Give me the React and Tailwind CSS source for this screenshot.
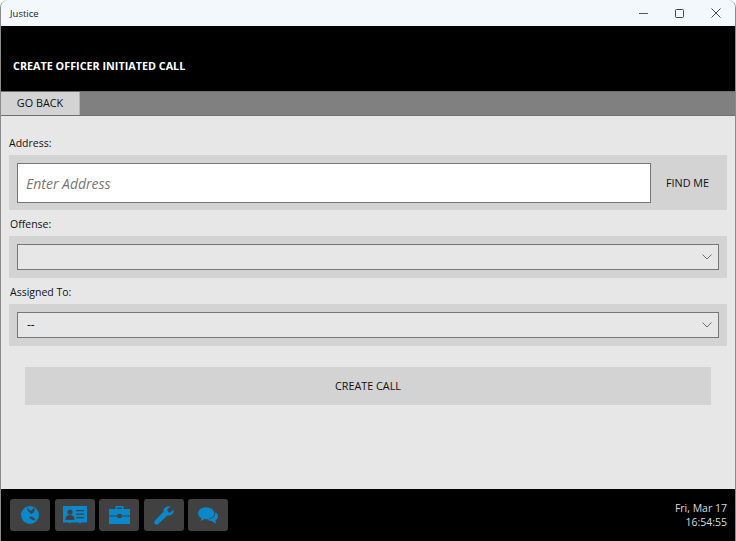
import React from "react";

const Globe = () => (
  <svg width="18" height="18" viewBox="0 0 18 18"><circle cx="9" cy="9" r="9" fill="#0a88cc"/><path d="M6.500 1.500 8 3.500 9.500 5 11.500 3.500 12.500 1.500 13.500 2.500 13.500 5 12 7 10 8 8 6 6 3.500Z M8 11 11 10.500 13.500 12.500 14.500 14.500 12 14 9.500 13Z" fill="#414141"/></svg>
);
const Card = () => (
  <svg width="24" height="18" viewBox="0 0 24 18"><path d="M0 0h24v16.500h-6l-1 1.500-1-1.500H8l-1 1.500-1-1.500H0z" fill="#0a88cc"/><circle cx="7" cy="6" r="2.600" fill="#414141"/><path d="M2.500 14c0-4 2-5 4.500-5s4.500 1 4.500 5z" fill="#414141"/><path d="M13 4h8v1.200h-8zM13 7.500h8v1.200h-8zM13 11h8v1.200h-8z" fill="#414141"/></svg>
);
const Brief = () => (
  <svg width="21" height="18" viewBox="0 0 21 18"><path d="M6.500 3V0h8v3h-1.500V1.500h-5V3z" fill="#0a88cc"/><path d="M0 3h21v6.500h-8.500V8h-4v1.500H0z" fill="#0a88cc"/><path d="M0 10.500h8.500V12h4v-1.500H21V18H0z" fill="#0a88cc"/></svg>
);
const Wrench = () => (
  <svg width="20" height="19" viewBox="0 0 21 20"><path d="M20.500 4 16.500 7 14.500 6 14 3.500 17.500.5C13.500-.8 9.500 2 10 6L.8 15.500C0 16.500 0 18 1 19 2 20 3.500 20 4.500 19L14 10C18 10.500 21.500 8 20.500 4Z" fill="#0a88cc"/></svg>
);
const Chat = () => (
  <svg width="20" height="17" viewBox="0 0 22 18"><ellipse cx="9" cy="6.500" rx="9" ry="6.500" fill="#0a88cc"/><path d="M4 11 3 15 9 12z" fill="#0a88cc"/><path d="M19 5.500c2 1 3 2.500 3 4.500 0 2-1.200 3.500-3 4.300l1 3.700-5-3c-2 0-3.500-.5-5-1.500 5 0 9.500-3 9-8.500z" fill="#0a88cc"/></svg>
);

const Chevron = () => (
  <svg width="10" height="6" viewBox="0 0 10 6" fill="none" stroke="#6e6e6e" strokeWidth="1"><path d="M.5.5 5 5 9.500.5"/></svg>
);

const Select = ({ value }) => (
  <div className="bg-[#d3d3d3] py-2 pl-2 pr-2">
    <div className="flex h-[26px] items-center justify-between border border-[#767676] bg-[#e7e7e7] pl-[9px] pr-[6px]">
      <span className="text-[12px] text-[#111]">{value}</span>
      <Chevron />
    </div>
  </div>
);

const IconBtn = ({ children }) => (
  <div className="flex h-[32px] w-[40px] items-center justify-center rounded-[3px] bg-[#414141]">{children}</div>
);

export default function App() {
  return (
    <div className="flex h-[541px] w-[736px] flex-col overflow-hidden rounded-t-[8px] border-x border-[#8a8a8a] bg-[#e7e7e7] font-['Open_Sans','Noto_Sans',sans-serif]">
      <div className="flex h-[26px] shrink-0 items-center justify-between bg-[#f3f8fc] pl-[9px] text-[9.500px] text-[#222]">
        <span className="pt-[2px]">Justice</span>
        <div className="flex items-center">
          <div className="flex w-[36px] justify-center">
            <div className="h-px w-[9px] bg-[#555]" />
          </div>
          <div className="flex w-[36px] justify-center">
            <div className="h-[9px] w-[9px] rounded-[1.500px] border border-[#444]" />
          </div>
          <div className="flex w-[38px] justify-center">
            <svg width="10" height="10" viewBox="0 0 10 10" stroke="#444" strokeWidth="1"><path d="M.5.5l9 9M9.500.5l-9 9"/></svg>
          </div>
        </div>
      </div>
      <div className="flex h-[65px] shrink-0 items-center bg-black pl-3 pt-[16px] text-[10.800px] font-bold text-white">
        CREATE OFFICER INITIATED CALL
      </div>
      <div className="flex h-[25px] shrink-0 border-y border-[#6f6f6f] bg-[#808080]">
        <div className="flex w-[79px] items-center justify-center border-r border-[#b5b5b5] bg-[#d3d3d3] text-[10.800px] text-[#111]">GO BACK</div>
      </div>
      <div className="flex min-h-0 flex-1 flex-col px-2 pt-[20px]">
        <div className="text-[10.500px] leading-[15px] text-[#111]">Address:</div>
        <div className="mt-[4px] flex h-[55px] items-center bg-[#d3d3d3] pl-2">
          <div className="flex h-[40px] w-[634px] items-center border border-[#767676] bg-white pl-2 pt-px text-[14px] italic text-[#777]">Enter Address</div>
          <div className="flex-1 pr-[3px] pt-[2px] text-center text-[10.800px] text-[#111]">FIND ME</div>
        </div>
        <div className="mt-[7px] pl-px text-[10.500px] leading-[15px] text-[#111]">Offense:</div>
        <div className="mt-[4px]"><Select value="" /></div>
        <div className="mt-[7px] pl-px text-[10.500px] leading-[15px] text-[#111]">Assigned To:</div>
        <div className="mt-[4px]"><Select value="--" /></div>
        <div className="mx-4 mt-[21px] flex h-[38px] items-center justify-center bg-[#d3d3d3] text-[10.800px] text-[#111]">CREATE CALL</div>
      </div>
      <div className="flex h-[52px] shrink-0 items-center justify-between bg-black pl-[9px] pr-[8px]">
        <div className="flex gap-[4.500px]">
          <IconBtn><Globe /></IconBtn>
          <IconBtn><Card /></IconBtn>
          <IconBtn><Brief /></IconBtn>
          <IconBtn><Wrench /></IconBtn>
          <IconBtn><Chat /></IconBtn>
        </div>
        <div className="text-right text-[10.500px] leading-[14px] text-[#ddd]">
          <div>Fri, Mar 17</div>
          <div>16:54:55</div>
        </div>
      </div>
    </div>
  );
}
